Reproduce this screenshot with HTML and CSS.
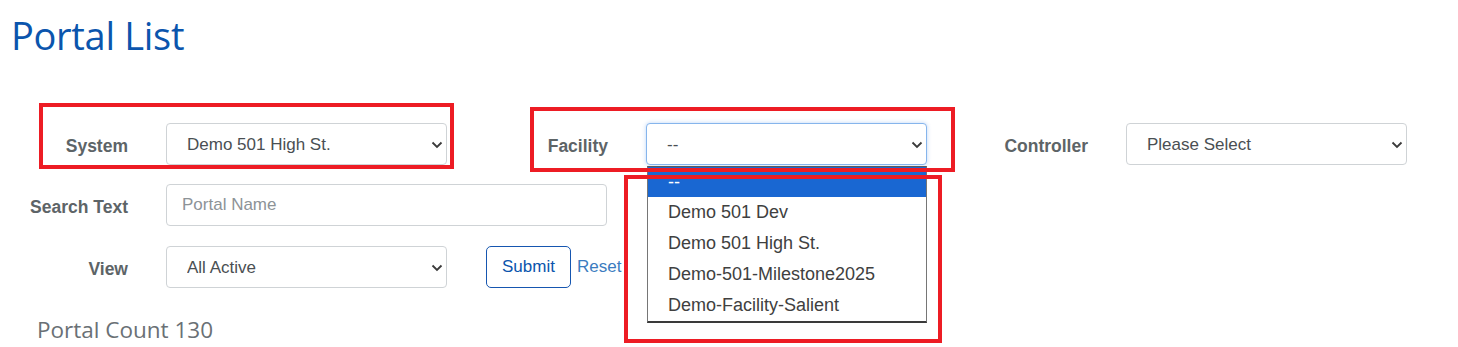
FILE: index.html
```html
<!DOCTYPE html>
<html lang="en">
<head>
    <meta charset="UTF-8">
    <meta name="viewport" content="width=device-width, initial-scale=1.0">
    <title>Portal List</title>
    <link rel="stylesheet" href="styles.css">
</head>
<body>
    <div class="page">
        <h1 class="page-title">Portal List</h1>

        <form class="filters">
            <div class="filter-row">
                <div class="field">
                    <label class="field-label">System</label>
                    <div class="select-wrap">
                        <select class="form-select">
                            <option>Demo 501 High St.</option>
                        </select>
                        <svg class="chevron" viewBox="0 0 12 8"><path d="M1.5 1.5 L6 6 L10.5 1.5"/></svg>
                    </div>
                </div>
                <div class="field">
                    <label class="field-label">Facility</label>
                    <div class="select-wrap">
                        <select class="form-select focused">
                            <option>--</option>
                        </select>
                        <svg class="chevron" viewBox="0 0 12 8"><path d="M1.5 1.5 L6 6 L10.5 1.5"/></svg>
                        <!-- open option list -->
                        <ul class="dropdown-list">
                            <li class="selected">--</li>
                            <li>Demo 501 Dev</li>
                            <li>Demo 501 High St.</li>
                            <li>Demo-501-Milestone2025</li>
                            <li>Demo-Facility-Salient</li>
                        </ul>
                    </div>
                </div>
                <div class="field">
                    <label class="field-label">Controller</label>
                    <div class="select-wrap">
                        <select class="form-select">
                            <option>Please Select</option>
                        </select>
                        <svg class="chevron" viewBox="0 0 12 8"><path d="M1.5 1.5 L6 6 L10.5 1.5"/></svg>
                    </div>
                </div>
            </div>

            <div class="filter-row">
                <div class="field field-wide">
                    <label class="field-label">Search Text</label>
                    <input class="search-input" type="text" placeholder="Portal Name">
                </div>
            </div>

            <div class="filter-row row-actions">
                <div class="field field-wide">
                    <label class="field-label">View</label>
                    <div class="select-wrap">
                        <select class="form-select">
                            <option>All Active</option>
                        </select>
                        <svg class="chevron" viewBox="0 0 12 8"><path d="M1.5 1.5 L6 6 L10.5 1.5"/></svg>
                    </div>
                    <button type="button" class="btn-submit">Submit</button>
                    <a href="#" class="reset-link">Reset</a>
                </div>
            </div>
        </form>

        <div class="portal-count">Portal Count 130</div>
    </div>

    <!-- red highlight annotations -->
    <div class="mark mark-system"></div>
    <div class="mark mark-facility"></div>
    <div class="mark mark-list"></div>
</body>
</html>
```

FILE: styles.css
```css
* {
    margin: 0;
    padding: 0;
    box-sizing: border-box;
}

body {
    position: relative;
    background-color: #fff;
    font-family: 'Liberation Sans', Arial, sans-serif;
    font-size: 17px;
    min-height: 347px;
    overflow: hidden;
}

.page {
    padding-left: 11px;
}

.page-title {
    margin-top: 12px;
    font-family: 'Open Sans', sans-serif;
    font-weight: 400;
    font-size: 38px;
    line-height: 46px;
    letter-spacing: -0.3px;
    color: #0b55ad;
}

.filters {
    margin-top: 65px;
    display: flex;
    flex-direction: column;
    gap: 19px;
}

.filter-row {
    display: flex;
}

.row-actions {
    margin-top: 1px;
}

.field {
    flex: none;
    width: 480px;
    display: flex;
    align-items: center;
}

.field-wide {
    width: auto;
}

.field-label {
    flex: none;
    width: 117px;
    margin-right: 38px;
    padding-top: 4px;
    text-align: right;
    font-weight: bold;
    font-size: 17.5px;
    white-space: nowrap;
    color: #5d6467;
}

.select-wrap {
    flex: none;
    position: relative;
}

.form-select {
    appearance: none;
    -webkit-appearance: none;
    width: 281px;
    height: 42px;
    padding: 0 30px 0 20px;
    border: 1px solid #cfd3d6;
    border-radius: 4px;
    background: #fff;
    font-family: inherit;
    font-size: 17px;
    color: #4a4f53;
    display: block;
}

.form-select.focused {
    border-color: #86b5ec;
    box-shadow: 0 0 4px rgba(40, 120, 230, 0.3);
}

.chevron {
    position: absolute;
    right: 4px;
    top: 18px;
    width: 12px;
    height: 8px;
    pointer-events: none;
}

.chevron path {
    fill: none;
    stroke: #3a3a3a;
    stroke-width: 1.8;
}

.dropdown-list {
    position: absolute;
    left: 1px;
    top: 43px;
    width: 280px;
    list-style: none;
    background: #fff;
    border: 1px solid #767676;
    border-top-color: #5a5a5a;
    border-bottom: 2px solid #3a3a3a;
    z-index: 5;
}

.dropdown-list li {
    height: 31px;
    line-height: 31px;
    padding-left: 20px;
    font-size: 18px;
    color: #404040;
    white-space: nowrap;
}

.dropdown-list li.selected {
    height: 30px;
    line-height: 30px;
    background-color: #1967d2;
    color: #fff;
}

.search-input {
    flex: none;
    width: 441px;
    height: 42px;
    padding: 0 15px;
    border: 1px solid #cfd3d6;
    border-radius: 4px;
    font-family: inherit;
    font-size: 17px;
    color: #4a4f53;
}

.search-input::placeholder {
    color: #8d9397;
}

.btn-submit {
    flex: none;
    margin-left: 39px;
    width: 85px;
    height: 42px;
    background: #fff;
    border: 1px solid #1656b0;
    border-radius: 5px;
    font-family: inherit;
    font-size: 17px;
    color: #0b55ad;
}

.reset-link {
    margin-left: 6px;
    color: #3b7cc0;
    text-decoration: none;
}

.portal-count {
    margin: 27px 0 0 26px;
    font-family: 'Open Sans', sans-serif;
    font-size: 22.5px;
    line-height: 30px;
    color: #6a7075;
}

.mark {
    position: absolute;
    border: 4px solid #ed1c24;
    pointer-events: none;
    z-index: 10;
}

.mark-system {
    left: 39px;
    top: 103px;
    width: 415px;
    height: 66px;
}

.mark-facility {
    left: 530px;
    top: 107px;
    width: 425px;
    height: 65px;
}

.mark-list {
    left: 624px;
    top: 175px;
    width: 318px;
    height: 168px;
}
```
